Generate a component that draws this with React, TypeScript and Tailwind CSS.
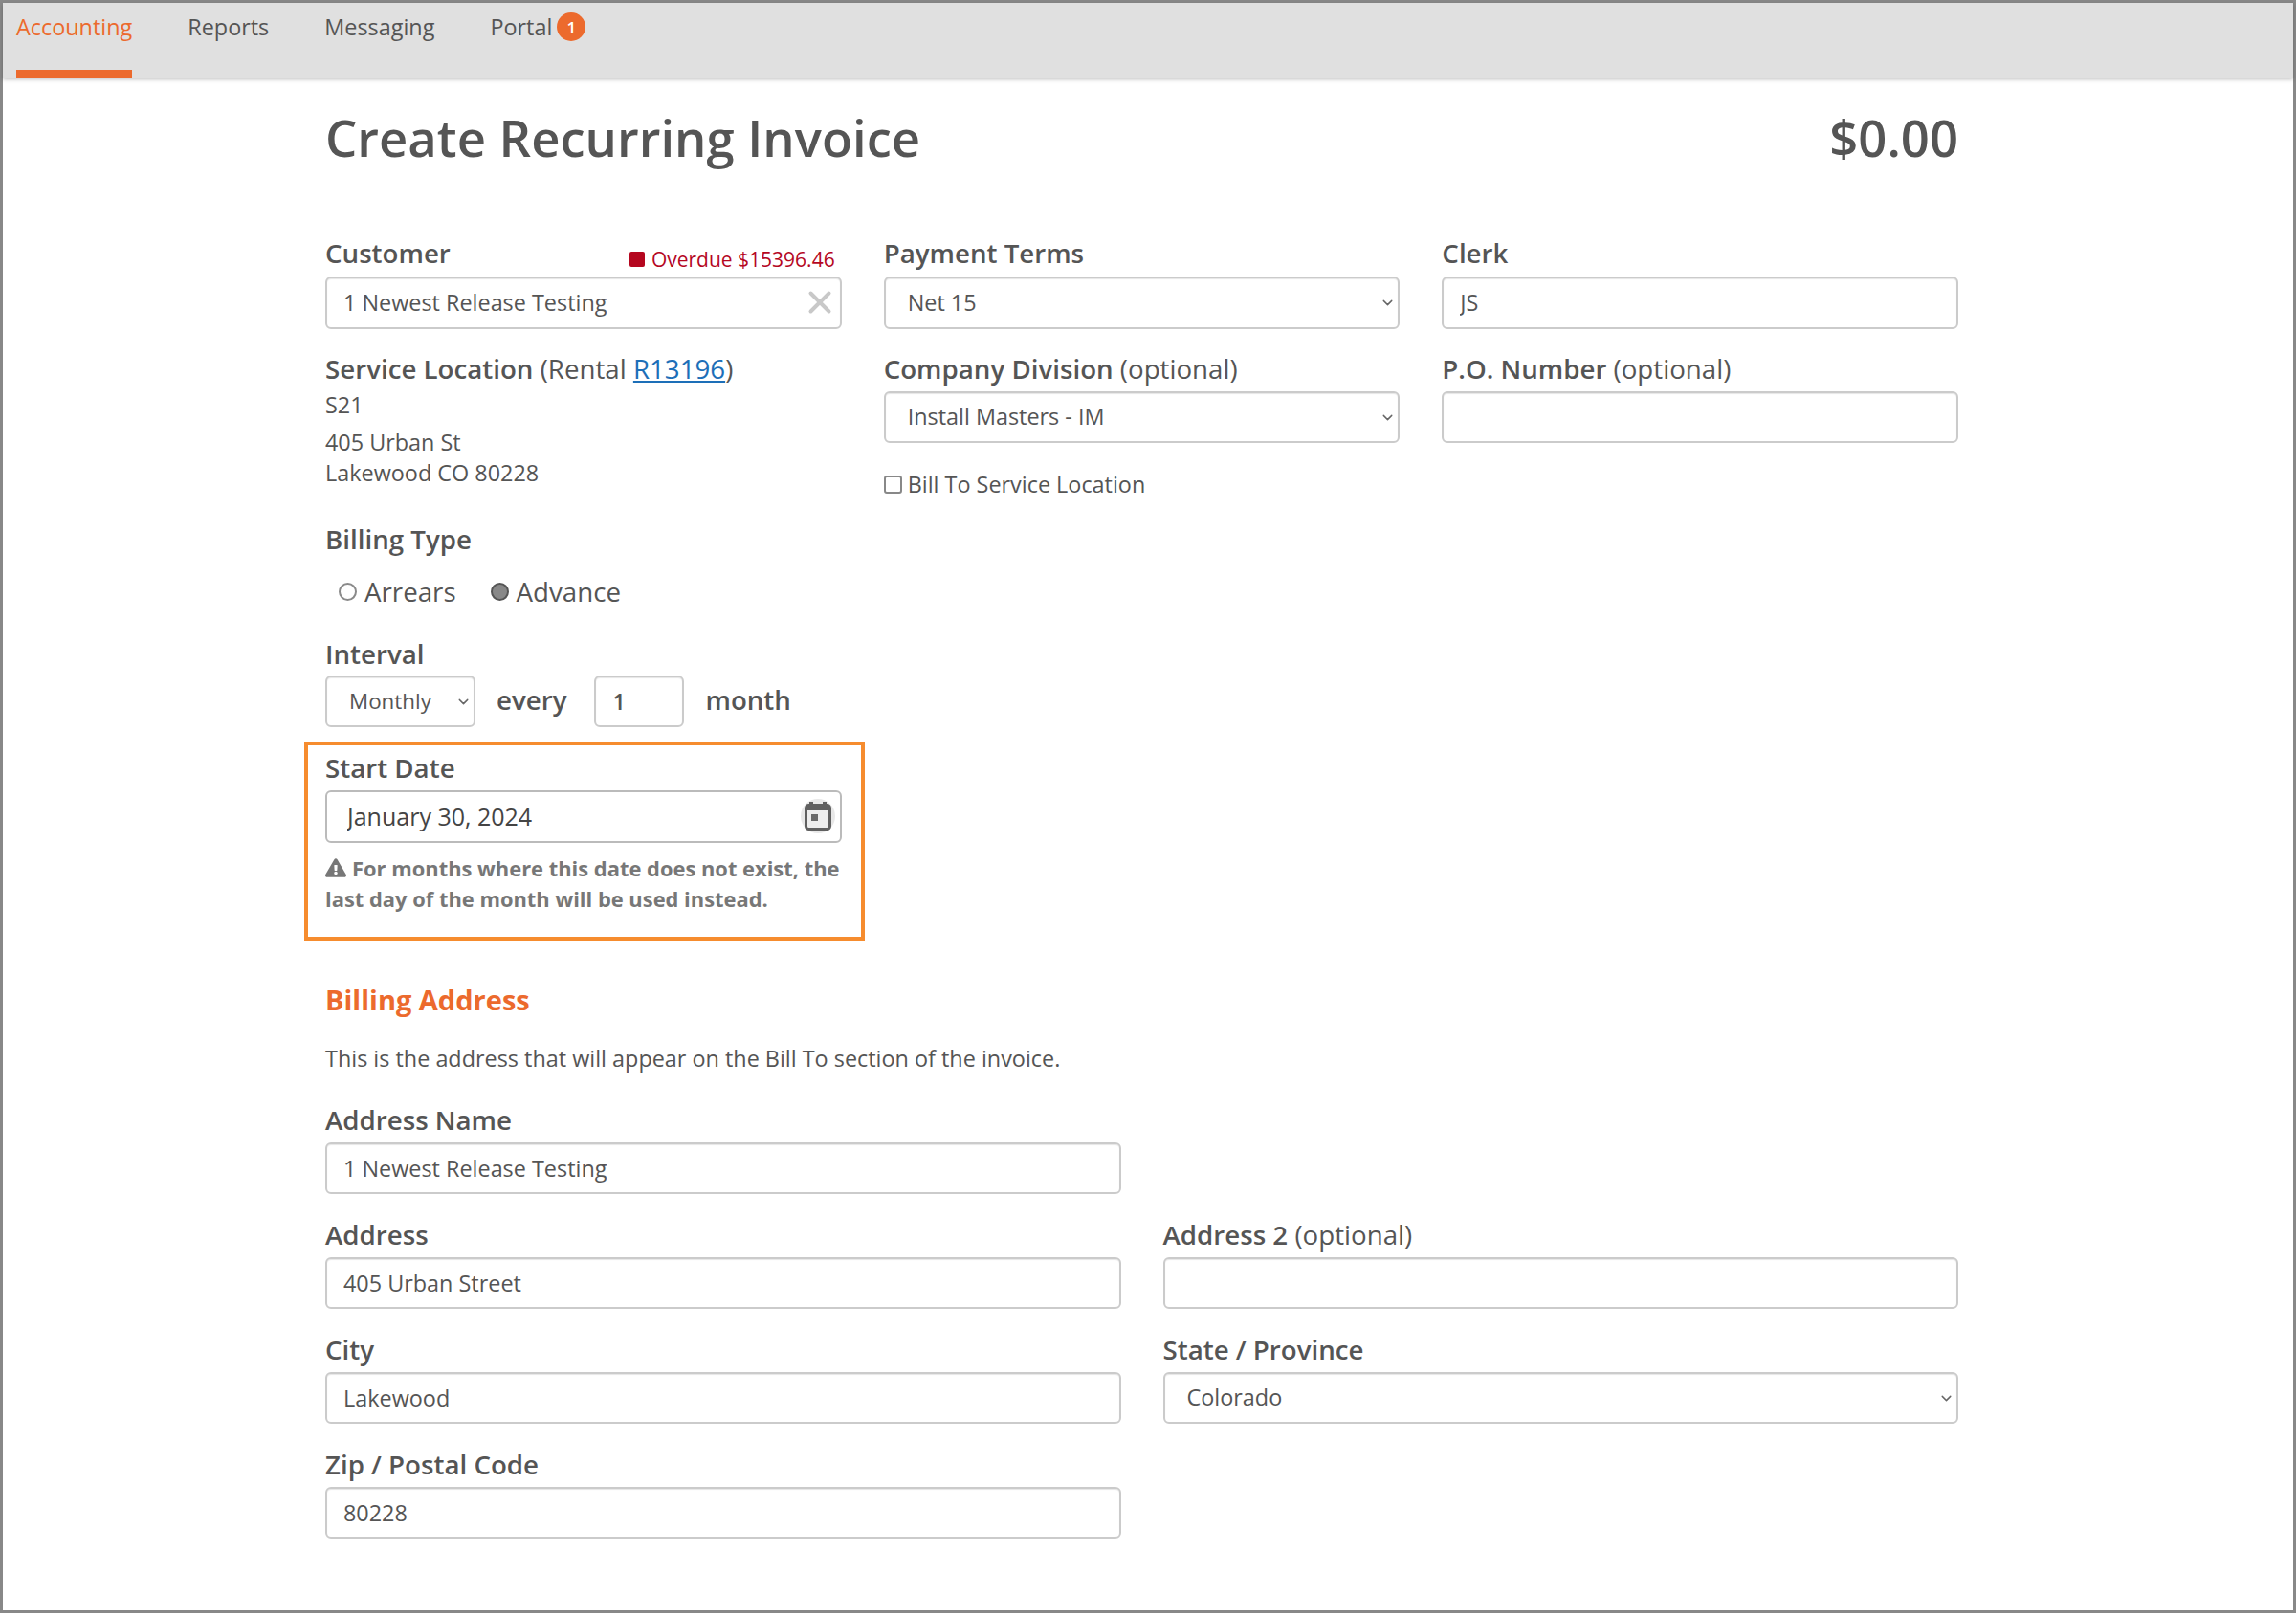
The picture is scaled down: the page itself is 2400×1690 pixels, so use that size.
import { ChevronDown, X } from "lucide-react";
import { FaExclamationTriangle } from "react-icons/fa";

function Label({ children, hint, gap = "mb-[6.5px]" }: { children: React.ReactNode; hint?: string; gap?: string }) {
  return (
    <div className={`h-[34px] ${gap} leading-[34px] text-[27.7px] font-semibold text-[#555] whitespace-nowrap`}>
      {children}
      {hint ? <span className="font-normal"> {hint}</span> : null}
    </div>
  );
}

function TextBox({ value, className = "" }: { value: string; className?: string }) {
  return (
    <input
      readOnly
      defaultValue={value}
      className={`block h-[54.5px] w-full rounded-[6px] border-2 border-[#cbcbcb] bg-white pl-[17px] text-[23.4px] text-[#555] shadow-[inset_0_1px_1px_rgba(0,0,0,0.1)] outline-none ${className}`}
    />
  );
}

function Dropdown({ value, className = "w-full", text = "text-[23.4px]" }: { value: string; className?: string; text?: string }) {
  return (
    <div className={`relative ${className}`}>
      <select
        defaultValue={value}
        className={`block h-[54.5px] w-full appearance-none rounded-[6px] border-2 border-[#cbcbcb] bg-white pl-[23px] ${text} font-normal text-[#555] shadow-[inset_0_1px_1px_rgba(0,0,0,0.1)] outline-none`}
      >
        <option>{value}</option>
      </select>
      <ChevronDown size={17} strokeWidth={2} className="absolute right-[4px] top-[19px] text-[#666]" />
    </div>
  );
}

function Field({ label, hint, children, className = "", gap }: { label: string; hint?: string; children: React.ReactNode; className?: string; gap?: string }) {
  return (
    <div className={className}>
      <Label hint={hint} gap={gap}>{label}</Label>
      {children}
    </div>
  );
}

function Radio({ label, checked }: { label: string; checked?: boolean }) {
  return (
    <label className="flex items-center gap-[8px] text-[27.7px] leading-[34px] text-[#555]">
      <span className={`h-[19px] w-[19px] rounded-full border-2 ${checked ? "border-[#555] bg-[#888]" : "border-[#8a8a8a] bg-white"}`} />
      {label}
    </label>
  );
}

function CalendarIcon() {
  return (
    <span className="absolute right-[7px] top-[9px] flex h-[36px] w-[36px] items-center justify-center rounded-full bg-[#e8e8e8]">
      <svg width="28" height="30" viewBox="0 0 28 30">
        <rect x="5" y="0" width="4" height="6" fill="#606060" />
        <rect x="19" y="0" width="4" height="6" fill="#606060" />
        <rect x="1.5" y="3.5" width="25" height="25" rx="3" fill="#ededed" stroke="#606060" strokeWidth="3" />
        <rect x="2" y="4" width="24" height="5" fill="#606060" />
        <rect x="7" y="13" width="7" height="7" fill="#6a6a6a" />
      </svg>
    </span>
  );
}

export default function App() {
  return (
    <div className="min-h-[1690px] bg-white font-['Open_Sans',sans-serif]">
      <div className="h-[1686px] border-[3px] border-[#888]">
        <nav className="flex h-[78px] gap-[58px] bg-[#e0e0e0] pl-[14px] text-[23.4px] text-[#555] shadow-[0_2px_4px_rgba(0,0,0,0.25)]">
          <a className="h-full border-b-[8px] border-[#ec6a2d] pt-[8px] leading-[34px] text-[#ec6a2d]">Accounting</a>
          <a className="pt-[8px] leading-[34px]">Reports</a>
          <a className="pt-[8px] leading-[34px]">Messaging</a>
          <a className="flex h-[42px] items-center gap-[5px] pt-[8px] leading-[34px]">
            Portal
            <span className="flex h-[30px] w-[30px] items-center justify-center rounded-full bg-[#ec6a2d] text-[17px] font-semibold leading-none text-white">1</span>
          </a>
        </nav>

        <main className="w-[1707px] ml-[337px]">
          <header className="flex h-[70px] items-center justify-between mt-[28px] mb-[68px] text-[#555]">
            <h1 className="text-[52.6px] font-semibold leading-[70px]">Create Recurring Invoice</h1>
            <div className="text-[52.6px] font-semibold leading-[70px]">$0.00</div>
          </header>

          <div className="grid grid-cols-3 gap-x-[44px]">
            <div>
              <div className="relative">
                <Label gap="mb-[8px]">Customer</Label>
                <div className="absolute right-[7px] top-[7.5px] flex items-center gap-[7px] text-[21px] leading-[32px] text-[#b5071f]">
                  <span className="h-[16px] w-[16px] rounded-[2px] bg-[#b5071f]" />
                  Overdue $15396.46
                </div>
                <div className="relative">
                  <TextBox value="1 Newest Release Testing" />
                  <X size={38} strokeWidth={2.5} className="absolute right-[4px] top-[8px] text-[#c8c8c8]" />
                </div>
              </div>

              <div className="mt-[24.5px] h-[34px] mb-[5px] text-[27.7px] leading-[34px] text-[#555] whitespace-nowrap">
                <span className="font-semibold">Service Location</span> (Rental <a className="text-[#1d6fb8] underline">R13196</a>)
              </div>
              <div className="text-[23.4px] leading-[32px] text-[#555]">S21</div>
              <div className="mt-[7px] text-[23.4px] leading-[32px] text-[#555]">
                405 Urban St
                <br />
                Lakewood CO 80228
              </div>

              <div className="mt-[36px] h-[34px] text-[27.7px] font-semibold leading-[34px] text-[#555]">Billing Type</div>
              <div className="mt-[21px] flex h-[34px] gap-[36px] pl-[14px]">
                <Radio label="Arrears" />
                <Radio label="Advance" checked />
              </div>

              <div className="mt-[31px]">
                <div className="h-[34px] mb-[5.5px] text-[27.7px] font-semibold leading-[34px] text-[#555]">Interval</div>
                <div className="flex items-center text-[27.7px] font-semibold text-[#555]">
                  <Dropdown value="Monthly" className="w-[157px]" text="text-[22.4px]" />
                  <span className="ml-[22px] -mt-[1px]">every</span>
                  <TextBox value="1" className="ml-[29px] !w-[94px]" />
                  <span className="ml-[22px] -mt-[1px]">month</span>
                </div>
              </div>

              <div className="mt-[14.5px] -ml-[22px] w-[586px] border-[4px] border-[#f68c2e] pl-[18px] pr-[18px] pt-[6px] pb-[23px]">
                <div className="h-[34px] mb-[7px] text-[27.7px] font-semibold leading-[34px] text-[#555]">Start Date</div>
                <div className="relative mr-[2px]">
                  <input
                    readOnly
                    defaultValue="January 30, 2024"
                    className="block h-[55px] w-full rounded-[6px] border-2 border-[#bbb] pl-[21px] text-[25px] text-[#444] outline-none"
                  />
                  <CalendarIcon />
                </div>
                <p className="mt-[11px] text-[21.9px] font-bold leading-[32px] text-[#777]">
                  <FaExclamationTriangle className="mr-[6px] inline-block align-[-2px] text-[22px]" />
                  For months where this date does not exist, the last day of the month will be used instead.
                </p>
              </div>
            </div>

            <div>
              <Field label="Payment Terms" gap="mb-[8px]">
                <Dropdown value="Net 15" />
              </Field>
              <Field label="Company Division" hint="(optional)" className="mt-[24.5px]">
                <Dropdown value="Install Masters - IM" />
              </Field>
              <label className="mt-[27px] flex items-center gap-[6px] text-[23.4px] leading-[32px] text-[#555]">
                <span className="h-[19px] w-[19px] rounded-[3px] border-2 border-[#888] bg-white" />
                Bill To Service Location
              </label>
            </div>

            <div>
              <Field label="Clerk" gap="mb-[8px]">
                <TextBox value="JS" />
              </Field>
              <Field label="P.O. Number" hint="(optional)" className="mt-[24.5px]">
                <TextBox value="" />
              </Field>
            </div>
          </div>

          <h2 className="mt-[45.5px] h-[34px] text-[29px] font-bold leading-[34px] text-[#ec6a2d]">Billing Address</h2>
          <p className="mt-[28px] text-[23.4px] leading-[32px] text-[#555]">This is the address that will appear on the Bill To section of the invoice.</p>

          <div className="mt-[31px] grid grid-cols-2 gap-x-[44px] gap-y-[25px]">
            <Field label="Address Name">
              <TextBox value="1 Newest Release Testing" />
            </Field>
            <div />
            <Field label="Address">
              <TextBox value="405 Urban Street" />
            </Field>
            <Field label="Address 2" hint="(optional)">
              <TextBox value="" />
            </Field>
            <Field label="City">
              <TextBox value="Lakewood" />
            </Field>
            <Field label="State / Province">
              <Dropdown value="Colorado" />
            </Field>
            <Field label="Zip / Postal Code">
              <TextBox value="80228" />
            </Field>
          </div>
        </main>
      </div>
    </div>
  );
}
